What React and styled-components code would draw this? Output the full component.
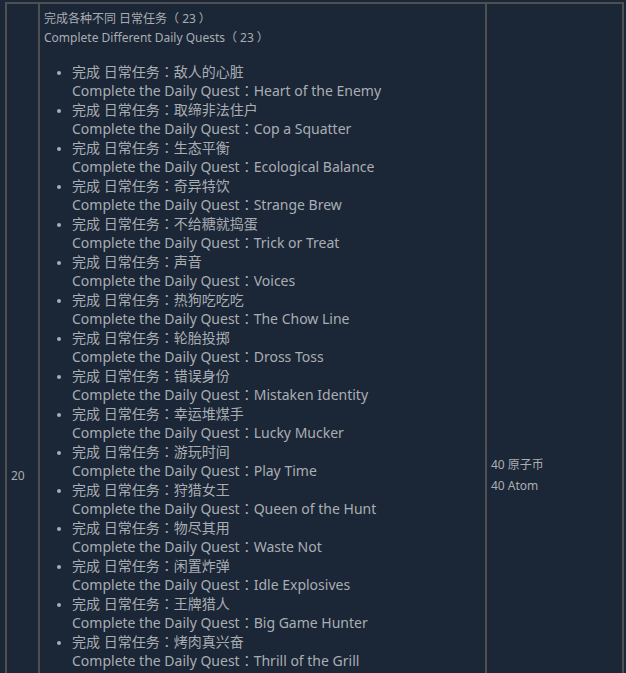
import React from "react";
import styled, { createGlobalStyle } from "styled-components";

const quests = [
  ["敌人的心脏", "Heart of the Enemy"],
  ["取缔非法住户", "Cop a Squatter"],
  ["生态平衡", "Ecological Balance"],
  ["奇异特饮", "Strange Brew"],
  ["不给糖就捣蛋", "Trick or Treat"],
  ["声音", "Voices"],
  ["热狗吃吃吃", "The Chow Line"],
  ["轮胎投掷", "Dross Toss"],
  ["错误身份", "Mistaken Identity"],
  ["幸运堆煤手", "Lucky Mucker"],
  ["游玩时间", "Play Time"],
  ["狩猎女王", "Queen of the Hunt"],
  ["物尽其用", "Waste Not"],
  ["闲置炸弹", "Idle Explosives"],
  ["王牌猎人", "Big Game Hunter"],
  ["烤肉真兴奋", "Thrill of the Grill"],
  ["贵宾来访", "Distinguished Guests"],
  ["解渴要紧", "Thirst Things First"],
  ["肥沃土壤", "Fertile Soil"],
  ["电线的重要性", "The Importance of Wire"],
  ["下午茶时间", "Tea Time"],
  ["战线", "Battle Lines"],
  ["复古黏液", "Retro Slime"],
];

const GlobalStyle = createGlobalStyle`
  html, body {
    margin: 0;
    background: #1b2636;
  }
  body {
    font-family: "Noto Sans", "Noto Sans CJK TC", sans-serif;
    color: #a9aeb4;
  }
`;

const Page = styled.div`
  padding: 2px 0 0 5px;
`;

const Table = styled.table`
  border-collapse: collapse;
  width: 619px;
  table-layout: fixed;
`;

const Col = styled.col`
  width: ${(p) => p.$width}px;
`;

const Cell = styled.td`
  border: 2px solid #4d4f52;
  padding: 5px 4px;
  vertical-align: middle;
  font-size: 12px;
  line-height: 19px;
`;

const Line = styled.div`
  white-space: nowrap;
`;

// fullwidth parens sit centred in the reference font
const Num = styled.span`
  margin: 0 3px;
`;

const QuestList = styled.ul`
  margin: 15px 0 5px;
  padding-left: 28px;
  font-size: 14px;
  line-height: 19px;
  list-style: disc;

  li::marker {
    font-size: 12px;
  }
`;

const Quest = styled.li`
  white-space: nowrap;
`;

const Reward = styled.div`
  line-height: 20px;
  padding-top: 1px;
`;

export default function App() {
  return (
    <>
      <GlobalStyle />
      <Page>
        <Table>
          <colgroup>
            <Col $width={33} />
            <Col $width={447} />
            <Col $width={137} />
          </colgroup>
          <tbody>
            <tr>
              <Cell>20</Cell>
              <Cell>
                <Line>
                  完成各种不同 日常任务（<Num>23</Num>）
                </Line>
                <Line>
                  Complete Different Daily Quests（<Num>23</Num>）
                </Line>
                <QuestList>
                  {quests.map(([zh, en]) => (
                    <Quest key={en}>
                      完成 日常任务：{zh}
                      <br />
                      Complete the Daily Quest：{en}
                    </Quest>
                  ))}
                </QuestList>
              </Cell>
              <Cell>
                <Reward>40 原子币</Reward>
                <Reward>40 Atom</Reward>
              </Cell>
            </tr>
          </tbody>
        </Table>
      </Page>
    </>
  );
}
